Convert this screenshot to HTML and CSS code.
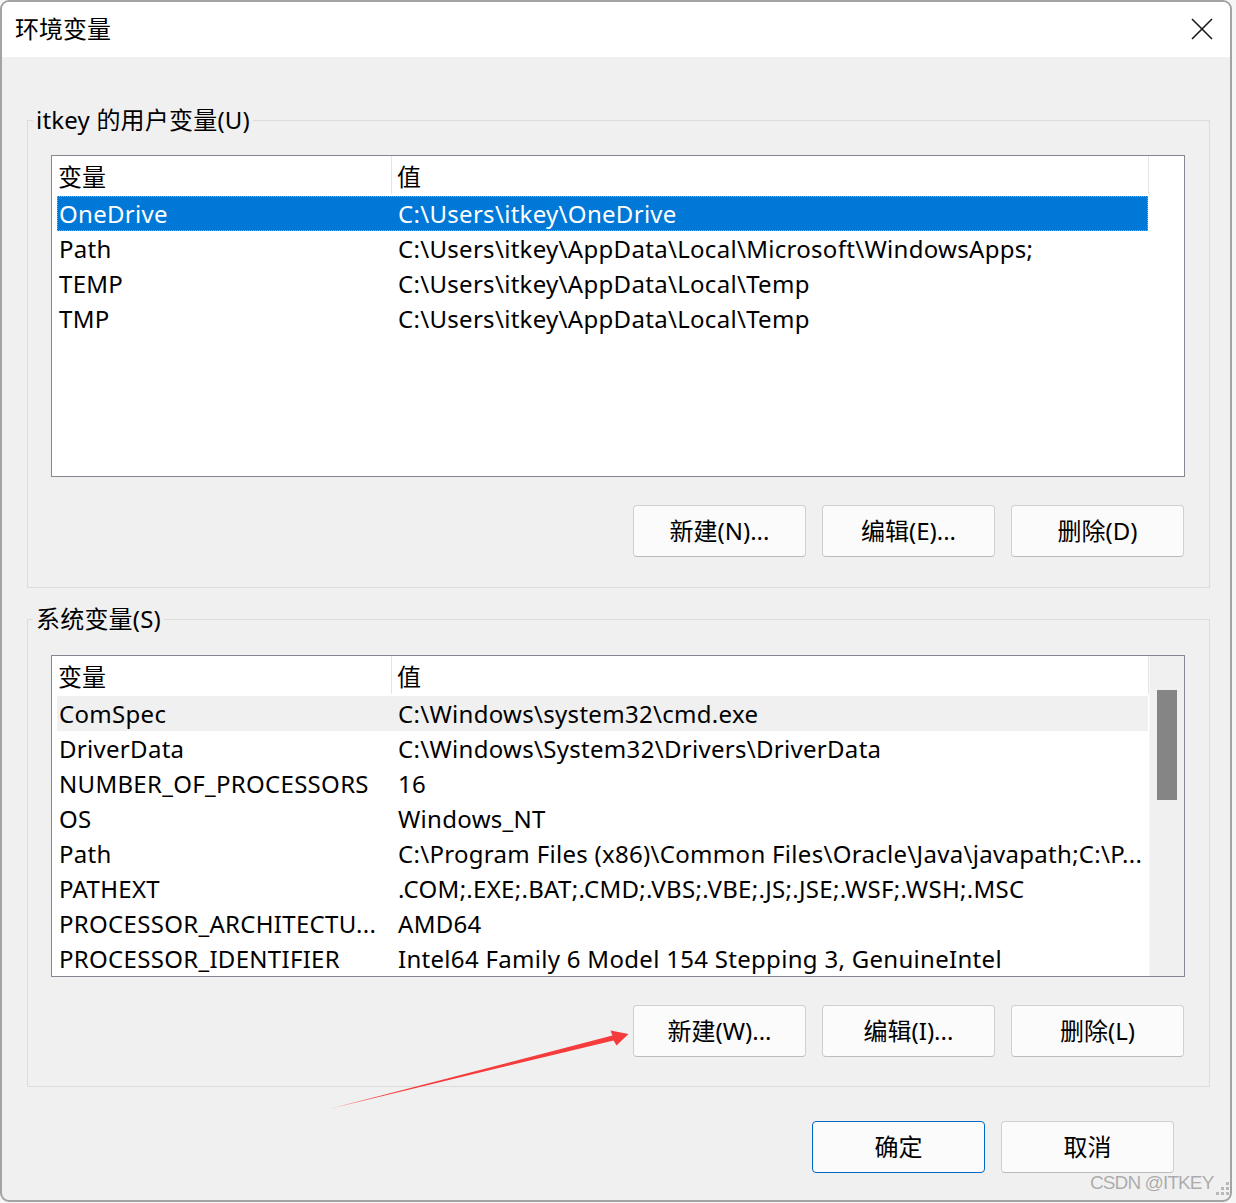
FILE: index.html
```html
<!DOCTYPE html>
<html lang="zh-CN">
<head>
<meta charset="utf-8">
<title>环境变量</title>
<link rel="stylesheet" href="styles.css">
</head>
<body>
<div class="window">
  <div class="titlebar">
    <span class="title">环境变量</span>
    <svg class="close" width="22" height="22" viewBox="0 0 22 22"><path d="M1 1 L21 21 M21 1 L1 21" stroke="#1a1a1a" stroke-width="1.6" fill="none"/></svg>
  </div>
  <div class="body">
    <fieldset class="group">
      <legend class="legend">itkey 的用户变量(U)</legend>
      <div class="list">
        <div class="list-main">
          <div class="header"><div class="hcell hc1">变量</div><div class="hcell hc2">值</div></div>
          <div class="row selected"><div class="cell c1">OneDrive</div><div class="cell c2">C:\Users\itkey\OneDrive</div></div>
          <div class="row"><div class="cell c1">Path</div><div class="cell c2">C:\Users\itkey\AppData\Local\Microsoft\WindowsApps;</div></div>
          <div class="row"><div class="cell c1">TEMP</div><div class="cell c2">C:\Users\itkey\AppData\Local\Temp</div></div>
          <div class="row"><div class="cell c1">TMP</div><div class="cell c2">C:\Users\itkey\AppData\Local\Temp</div></div>
        </div>
      </div>
      <div class="buttons">
        <button class="btn">新建(N)...</button>
        <button class="btn">编辑(E)...</button>
        <button class="btn">删除(D)</button>
      </div>
    </fieldset>
    <fieldset class="group group-sys">
      <legend class="legend">系统变量(S)</legend>
      <div class="list">
        <div class="list-main">
          <div class="header"><div class="hcell hc1">变量</div><div class="hcell hc2">值</div></div>
          <div class="row hover"><div class="cell c1">ComSpec</div><div class="cell c2">C:\Windows\system32\cmd.exe</div></div>
          <div class="row"><div class="cell c1">DriverData</div><div class="cell c2">C:\Windows\System32\Drivers\DriverData</div></div>
          <div class="row"><div class="cell c1">NUMBER_OF_PROCESSORS</div><div class="cell c2">16</div></div>
          <div class="row"><div class="cell c1">OS</div><div class="cell c2">Windows_NT</div></div>
          <div class="row"><div class="cell c1">Path</div><div class="cell c2">C:\Program Files (x86)\Common Files\Oracle\Java\javapath;C:\P...</div></div>
          <div class="row"><div class="cell c1">PATHEXT</div><div class="cell c2">.COM;.EXE;.BAT;.CMD;.VBS;.VBE;.JS;.JSE;.WSF;.WSH;.MSC</div></div>
          <div class="row"><div class="cell c1">PROCESSOR_ARCHITECTU...</div><div class="cell c2">AMD64</div></div>
          <div class="row"><div class="cell c1">PROCESSOR_IDENTIFIER</div><div class="cell c2">Intel64 Family 6 Model 154 Stepping 3, GenuineIntel</div></div>
        </div>
        <div class="scrollbar"><div class="thumb"></div></div>
      </div>
      <div class="buttons">
        <button class="btn">新建(W)...</button>
        <button class="btn">编辑(I)...</button>
        <button class="btn">删除(L)</button>
      </div>
    </fieldset>
    <div class="dialog-buttons">
      <button class="btn btn-default">确定</button>
      <button class="btn">取消</button>
    </div>
  </div>
  <svg class="arrow" width="1232" height="1202" viewBox="0 0 1232 1202">
    <polygon points="331,1108.5 612.4,1035.6 610.5,1030.6 628.5,1034 616.5,1045.5 613.6,1040.4" fill="#f53b3b"/>
  </svg>
  <div class="watermark">CSDN @ITKEY</div>
  <svg class="grip" width="18" height="18" viewBox="0 0 18 18">
    <rect x="13" y="2" width="3" height="3" fill="#b8b8b8"/>
    <rect x="8" y="7" width="3" height="3" fill="#b8b8b8"/>
    <rect x="13" y="7" width="3" height="3" fill="#b8b8b8"/>
    <rect x="3" y="12" width="3" height="3" fill="#b8b8b8"/>
    <rect x="8" y="12" width="3" height="3" fill="#b8b8b8"/>
    <rect x="13" y="12" width="3" height="3" fill="#b8b8b8"/>
  </svg>
</div>
</body>
</html>
```
FILE: styles.css
```css
* { box-sizing: border-box; }
html, body { margin: 0; padding: 0; }
body {
  background: #f6f6f6;
  font-family: "Noto Sans", "Noto Sans CJK SC", sans-serif;
  font-size: 24px;
  color: #000;
}
.window {
  position: relative;
  width: 1232px;
  height: 1202px;
  border: 2px solid #a3a3a3;
  border-radius: 9px;
  background: #f0f0f0;
  overflow: hidden;
}
.titlebar {
  height: 55px;
  background: #fff;
  display: flex;
  align-items: center;
  justify-content: space-between;
  padding: 0 17px 3px 13px;
}
.title {
  font-family: "Noto Sans CJK SC", sans-serif;
  font-size: 24px;
  line-height: 32px;
}
.close { display: block; margin-top: 2px; }
.body {
  padding: 47px 20px 0 25px;
}
.group {
  margin: 0;
  padding: 19px 24px 30px 23px;
  border: 1px solid #dcdcdc;
  min-width: 0;
}
.group-sys {
  margin-top: 15px;
  padding-top: 20px;
  padding-bottom: 29px;
}
.legend {
  margin-left: -18px;
  padding: 0 3px;
  line-height: 32px;
  font-size: 24px;
  letter-spacing: 0.2px;
}
.list {
  height: 322px;
  border: 1px solid #828790;
  background: #fff;
  display: flex;
}
.list-main {
  flex: 1;
  overflow: hidden;
}
.header {
  display: flex;
  height: 40px;
}
.hcell {
  height: 38px;
  line-height: 42px;
  border-right: 1px solid #e5e5e5;
  white-space: nowrap;
}
.hc1 { width: 340px; padding-left: 6px; }
.hc2 { width: 757px; padding-left: 5px; }
.row {
  display: grid;
  grid-template-columns: 334px 1fr;
  height: 35px;
  line-height: 35px;
  margin-left: 5px;
  width: 1091px;
  white-space: nowrap;
  letter-spacing: 0.3px;
}
.cell { overflow: hidden; }
.c1 { padding-left: 2px; }
.c2 { padding-left: 7px; }
.row.selected {
  background: #0078d7;
  color: #fff;
  outline: 1px dotted #e39b3b;
  outline-offset: -1px;
}
.row.hover { background: #f0f0f0; }
.scrollbar {
  width: 35px;
  background: #f0f0f0;
  padding-top: 34px;
  border-left: 1px solid #f7f7f7;
}
.thumb {
  margin-left: 7px;
  width: 20px;
  height: 110px;
  background: #858585;
}
.buttons {
  display: flex;
  justify-content: flex-end;
  gap: 16px;
  margin-top: 28px;
  margin-right: 1px;
}
.btn {
  width: 173px;
  height: 52px;
  background: #fbfbfb;
  border: 1px solid #d0d0d0;
  border-bottom-color: #bdbdbd;
  border-radius: 4px;
  font-family: "Noto Sans", "Noto Sans CJK SC", sans-serif;
  font-size: 24px;
  color: #000;
  padding: 0 0 3px 0;
}
.btn-default {
  border: 1px solid #0067c0;
}
.dialog-buttons {
  display: flex;
  justify-content: flex-end;
  gap: 16px;
  margin-top: 34px;
  padding-right: 36px;
}
.arrow {
  position: absolute;
  left: -2px;
  top: -2px;
  pointer-events: none;
}
.watermark {
  position: absolute;
  left: 1088px;
  top: 1170px;
  font-family: "Liberation Sans", Arial, sans-serif;
  font-size: 19px;
  letter-spacing: -0.9px;
  color: #ababab;
  text-shadow: 0 0 1px #fff;
}
.grip {
  position: absolute;
  left: 1211px;
  top: 1178px;
}
```
